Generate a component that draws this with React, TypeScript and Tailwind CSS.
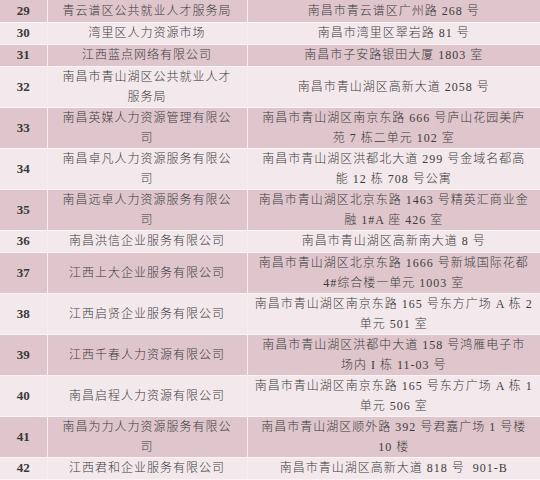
type Row = {
  no: number;
  name: string[];
  addr: string[];
};

const rows: Row[] = [
  { no: 29, name: ['青云谱区公共就业人才服务局'], addr: ['南昌市青云谱区广州路 268 号'] },
  { no: 30, name: ['湾里区人力资源市场'], addr: ['南昌市湾里区翠岩路 81 号'] },
  { no: 31, name: ['江西蓝点网络有限公司'], addr: ['南昌市子安路银田大厦 1803 室'] },
  { no: 32, name: ['南昌市青山湖区公共就业人才', '服务局'], addr: ['南昌市青山湖区高新大道 2058 号'] },
  { no: 33, name: ['南昌英媒人力资源管理有限公', '司'], addr: ['南昌市青山湖区南京东路 666 号庐山花园美庐', '苑 7 栋二单元 102 室'] },
  { no: 34, name: ['南昌卓凡人力资源服务有限公', '司'], addr: ['南昌市青山湖区洪都北大道 299 号金域名都高', '能 12 栋 708 号公寓'] },
  { no: 35, name: ['南昌远卓人力资源服务有限公', '司'], addr: ['南昌市青山湖区北京东路 1463 号精英汇商业金', '融 1#A 座 426 室'] },
  { no: 36, name: ['南昌洪信企业服务有限公司'], addr: ['南昌市青山湖区高新南大道 8 号'] },
  { no: 37, name: ['江西上大企业服务有限公司'], addr: ['南昌市青山湖区北京东路 1666 号新城国际花都', '4#综合楼一单元 1003 室'] },
  { no: 38, name: ['江西启贤企业服务有限公司'], addr: ['南昌市青山湖区南京东路 165 号东方广场 A 栋 2', '单元 501 室'] },
  { no: 39, name: ['江西千春人力资源有限公司'], addr: ['南昌市青山湖区洪都中大道 158 号鸿雁电子市', '场内 I 栋 11-03 号'] },
  { no: 40, name: ['南昌启程人力资源有限公司'], addr: ['南昌市青山湖区南京东路 165 号东方广场 A 栋 1', '单元 506 室'] },
  { no: 41, name: ['南昌为力人力资源服务有限公', '司'], addr: ['南昌市青山湖区顺外路 392 号君嘉广场 1 号楼', '10 楼'] },
  { no: 42, name: ['江西君和企业服务有限公司'], addr: ['南昌市青山湖区高新大道 818 号  901-B'] },
];

function Lines({ items }: { items: string[] }) {
  return (
    <>
      {items.map((t, i) => (
        <div key={i} className="whitespace-pre">{t}</div>
      ))}
    </>
  );
}

export default function App() {
  return (
    <div className="w-[540px] h-[480px] overflow-hidden bg-[#f7eff1] font-['Liberation_Serif','Noto_Sans_CJK_SC',serif] text-[12px] tracking-[1px] leading-[20px] text-[#3d3d3d]">
      <table className="w-[540px] table-fixed border-collapse">
        <colgroup>
          <col className="w-[47px]" />
          <col className="w-[200px]" />
          <col className="w-[293px]" />
        </colgroup>
        <tbody>
          {rows.map((r, i) => {
            const bg = i % 2 === 0 ? 'bg-[#dfc5cc]' : 'bg-[#f3e8eb]';
            return (
              <tr key={r.no} className={`${bg} h-[22px] border-b border-[#faf4f5]`}>
                <td className="text-center align-middle border-r border-[#f6eef0] text-[13px] tracking-normal font-bold text-[#3a3a3a]">
                  {r.no}
                </td>
                <td className="text-center align-middle border-r border-[#f6eef0] px-0 font-light">
                  <Lines items={r.name} />
                </td>
                <td className="text-center align-middle px-0 font-light">
                  <Lines items={r.addr} />
                </td>
              </tr>
            );
          })}
        </tbody>
      </table>
    </div>
  );
}
